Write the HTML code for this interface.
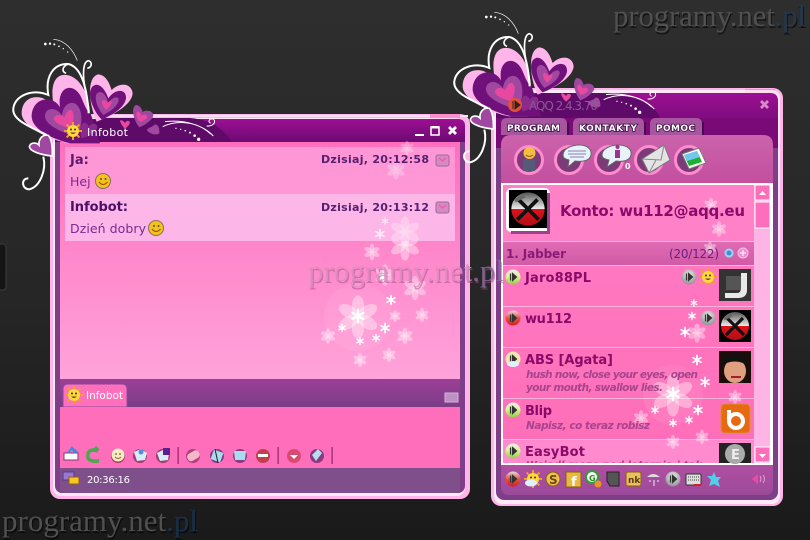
<!DOCTYPE html>
<html><head><meta charset="utf-8"><title>AQQ</title>
<style>
html,body{margin:0;padding:0;background:#222;width:810px;height:540px;overflow:hidden}
svg{display:block;position:absolute;left:0;top:0}
.d{font-family:"DejaVu Sans",sans-serif}
.db{font-family:"DejaVu Sans",sans-serif;font-weight:bold}
.wm{font-family:"Liberation Serif",serif;font-size:31px;filter:drop-shadow(1px 2px 0 rgba(0,0,0,.55))}
.wc{font-family:"Liberation Serif",serif;font-size:31px;filter:drop-shadow(1px 2px 0 rgba(170,70,140,.6))}
.tab{paint-order:stroke;stroke:#3a0a40;stroke-width:1.6px}
</style></head><body>
<svg width="810" height="540" viewBox="0 0 810 540" xmlns="http://www.w3.org/2000/svg">
<defs>
<linearGradient id="bg" x1="0" y1="0" x2="0" y2="1"><stop offset="0" stop-color="#2e2e2e"/><stop offset=".55" stop-color="#262626"/><stop offset="1" stop-color="#1a1a1a"/></linearGradient>
<linearGradient id="tb" x1="0" y1="0" x2="0" y2="1"><stop offset="0" stop-color="#9c0f92"/><stop offset="1" stop-color="#6d0a72"/></linearGradient>
<linearGradient id="pk" x1="0" y1="0" x2="0" y2="1"><stop offset="0" stop-color="#ff6fbe"/><stop offset="1" stop-color="#ffa3da"/></linearGradient>
<linearGradient id="strip" x1="0" y1="0" x2="0" y2="1"><stop offset="0" stop-color="#9c3f98"/><stop offset="1" stop-color="#7a3d86"/></linearGradient>
<linearGradient id="panel" x1="0" y1="0" x2="0" y2="1"><stop offset="0" stop-color="#cc63ac"/><stop offset="1" stop-color="#c24f9f"/></linearGradient>
<linearGradient id="row" x1="0" y1="0" x2="0" y2="1"><stop offset="0" stop-color="#ff7cc4"/><stop offset="1" stop-color="#ff6db8"/></linearGradient>
<linearGradient id="hdr" x1="0" y1="0" x2="0" y2="1"><stop offset="0" stop-color="#e06cb4"/><stop offset="1" stop-color="#d25aa6"/></linearGradient>
<linearGradient id="bt" x1="0" y1="0" x2="0" y2="1"><stop offset="0" stop-color="#b04fa2"/><stop offset="1" stop-color="#9c4a9a"/></linearGradient>
<radialGradient id="gr" cx=".5" cy=".35" r=".7"><stop offset="0" stop-color="#eee"/><stop offset="1" stop-color="#8a8a8a"/></radialGradient>
<linearGradient id="gn" x1="0" y1="0" x2="0" y2="1"><stop offset="0" stop-color="#eee"/><stop offset=".5" stop-color="#d8f090"/><stop offset="1" stop-color="#90d040"/></linearGradient>
<linearGradient id="rd" x1="0" y1="0" x2="0" y2="1"><stop offset="0" stop-color="#ddd"/><stop offset=".5" stop-color="#e85040"/><stop offset="1" stop-color="#d02020"/></linearGradient>
<linearGradient id="pft" x1="0" y1="0" x2="0" y2="1"><stop offset="0" stop-color="#555"/><stop offset=".5" stop-color="#eee"/><stop offset=".5" stop-color="#e01018"/><stop offset="1" stop-color="#b01018"/></linearGradient>
<g id="fl"><g fill="#fff" fill-opacity=".38"><ellipse cx="0" cy="-6" rx="3.400" ry="6"/><ellipse cx="0" cy="-6" rx="3.400" ry="6" transform="rotate(60)"/><ellipse cx="0" cy="-6" rx="3.400" ry="6" transform="rotate(120)"/><ellipse cx="0" cy="-6" rx="3.400" ry="6" transform="rotate(180)"/><ellipse cx="0" cy="-6" rx="3.400" ry="6" transform="rotate(240)"/><ellipse cx="0" cy="-6" rx="3.400" ry="6" transform="rotate(300)"/></g></g>
<g id="fw"><g stroke="#fff" stroke-width="1.700" stroke-linecap="round"><path d="M0-4.500V4.500M-3.900-2.200 3.900 2.200M-3.900 2.200 3.900-2.200"/></g></g>
<g id="st"><path d="M-2.500-3.500V3.500M-.5-3.500 3.500 0-.5 3.500Z" fill="#333" stroke="#333" stroke-width="1.200"/></g>
<g id="sg"><circle r="7.500" fill="url(#gr)"/><use href="#st"/></g>
<g id="sn"><circle r="7.500" fill="url(#gn)"/><use href="#st"/></g>
<g id="sr"><circle r="7.500" fill="url(#rd)"/><use href="#st"/></g>
<g id="sun"><path d="M0-9V9M-9 0H9M-6.400-6.400 6.400 6.400M-6.400 6.400 6.400-6.400" stroke="#f0a020" stroke-width="2"/><circle r="6" fill="#ffd83a"/><circle cx="-2" cy="-1.500" r="1" fill="#333"/><circle cx="2" cy="-1.500" r="1" fill="#333"/><path d="M-3 1.500Q0 4.500 3 1.500Z" fill="#633"/></g>
<g id="sm"><circle r="7.500" fill="#f5c21c" stroke="#80705a"/><circle cx="-2" cy="-2" r="1" fill="#553"/><circle cx="2.500" cy="-2" r="1" fill="#553"/><path d="M-4 1Q0 6 4.500 1" fill="none" stroke="#a05010" stroke-width="1.200"/></g>
<g id="pf"><rect x="-16" y="-16" width="32" height="32" fill="#000"/><circle r="14" fill="url(#pft)"/><path d="M-8-8 9 9M8-8-9 9" stroke="#111" stroke-width="3.200"/><path d="M-11-7-3-11" stroke="#666" stroke-width="3"/></g>
<g id="decor">
<g transform="translate(0,30) scale(.3333)">
<path d="M205 340C150 330 65 290 65 250C65 195 125 185 162 228C150 175 160 130 200 135C240 140 268 195 270 250L262 340Z" fill="#ffb4ea"/>
<path d="M210 340C150 325 92 295 95 255C100 200 160 195 180 232C170 165 225 155 245 205C256 232 262 245 272 250L300 340Z" fill="#70107a"/>
<path d="M205 312C170 300 132 280 135 255C140 230 170 232 186 256C190 215 228 205 240 240C250 270 240 300 232 320Z" fill="#a0489f"/>
<path d="M200 292C178 285 160 275 162 264C168 250 188 255 194 263C198 240 215 232 220 250C224 268 216 285 208 296Z" fill="#e8489f"/>
<path d="M245 325C238 305 240 280 252 278C260 278 264 285 266 290C275 278 292 278 292 292C290 305 270 318 245 325Z" fill="#8a2a8a"/>
<path d="M290 275C265 220 260 140 295 133C320 135 330 165 335 180C360 155 395 160 398 190C395 225 340 255 290 275Z" fill="#ffb4ea"/>
<path d="M305 268C275 240 255 175 285 165C305 160 320 190 325 205C345 175 380 175 378 205C375 230 340 255 305 268Z" fill="#70107a"/>
<path d="M310 255C285 225 280 190 298 186C315 186 320 205 325 218C340 198 358 198 356 212C350 232 330 245 310 255Z" fill="#a0489f"/>
<path d="M318 240C305 225 303 212 310 210C317 210 320 215 322 220C328 212 335 212 335 218C332 228 325 235 318 240Z" fill="#e8489f"/>
<path d="M418 292C400 270 392 232 408 225C420 225 426 238 428 246C440 238 460 242 460 258C455 272 435 285 418 292Z" fill="#a0489f"/>
<path d="M420 276C410 265 405 250 412 245C420 245 423 252 425 257C432 252 442 254 442 262C438 268 430 273 420 276Z" fill="#e8489f"/>
<path d="M157 378C125 375 90 365 88 350C92 335 110 338 117 345C115 325 130 312 145 316C155 325 158 355 157 378Z" fill="#a0489f" stroke="#fff" stroke-width="5"/>
<path d="M140 315C90 290 35 270 40 235C45 195 100 175 145 195C135 140 160 100 205 102C240 110 260 160 266 250" fill="none" stroke="#fff" stroke-width="6"/>
<path d="M205 102C185 110 185 125 198 130M258 190C245 130 250 95 265 92C277 95 277 112 262 115" fill="none" stroke="#fff" stroke-width="5"/>
<path d="M160 28C195 30 220 60 232 92" fill="none" stroke="#fff" stroke-width="2"/>
<path d="M130 380C140 420 120 470 88 478C65 478 62 445 85 445" fill="none" stroke="#fff" stroke-width="6"/>
<g fill="#fff"><circle cx="136" cy="42" r="4"/><circle cx="150" cy="41" r="3.500"/><circle cx="163" cy="43" r="3"/><circle cx="177" cy="49" r="2.500"/><circle cx="190" cy="56" r="2"/><circle cx="203" cy="66" r="2"/></g>
</g>
</g>
<g id="swoosh"><g transform="translate(0,30) scale(.3333)">
<path d="M488 290C530 270 590 272 632 312M495 275C550 268 610 285 640 318M620 288C640 290 650 275 640 267C628 265 622 275 632 280" fill="none" stroke="#fff" stroke-width="3"/>
<g fill="#fff"><circle cx="596" cy="328" r="5"/><circle cx="584" cy="317" r="4"/><circle cx="570" cy="308" r="3"/><circle cx="556" cy="302" r="2.500"/><circle cx="542" cy="298" r="2"/><circle cx="528" cy="295" r="2"/></g>
<path d="M360 272C366 268 372 276 375 279C378 272 388 270 390 278C388 286 380 292 375 296C370 292 362 282 360 272Z" fill="#e8489f"/>
<path d="M440 300C448 290 458 292 462 285C472 278 480 295 478 310C465 318 448 310 440 300Z" fill="#a0489f"/>
</g></g>
</defs>

<rect width="810" height="540" fill="url(#bg)"/>
<rect x="-6" y="244" width="12" height="46" rx="3" fill="#151515" stroke="#3c3c3c"/>
<text class="wm" x="613" y="26" fill="#505050" textLength="193">programy.net<tspan fill="#23384f">.pl</tspan></text>
<text class="wm" x="2" y="531" fill="#505050" textLength="196">programy.net<tspan fill="#18304a">.pl</tspan></text>

<!-- WINDOW 1 -->
<rect x="50" y="114" width="420" height="385" rx="10" fill="#ffb4ea"/>
<rect x="52" y="115" width="416" height="2" fill="#ffe0f4"/>
<rect x="430" y="114" width="30" height="5" fill="#ff8ccf"/>
<rect x="53" y="118" width="412" height="378" rx="8" fill="#fff" opacity=".7"/>
<rect x="55" y="119" width="410" height="374" rx="7" fill="#7f3f88"/>
<path d="M55 142V126Q55 119 62 119H458Q465 119 465 126V142Z" fill="url(#tb)"/>
<path d="M55 142V128L100 118H190C215 120 225 132 232 142Z" fill="#5e0a68"/>
<rect x="60" y="142" width="400" height="237" fill="url(#pk)"/>
<!-- flowers w1 -->
<g>
<circle cx="358" cy="317" r="34" fill="#fff" fill-opacity=".07"/>
<g transform="translate(358,317) scale(1.800)"><use href="#fl"/></g>
<g transform="translate(358,316) scale(1.400)"><use href="#fw"/></g>
<g transform="translate(391,300)"><use href="#fw"/></g><g transform="translate(383,277)"><use href="#fw"/></g>
<g transform="translate(342,328) scale(.8)"><use href="#fw"/></g><g transform="translate(385,328)"><use href="#fw"/></g>
<g transform="translate(360,341) scale(.8)"><use href="#fw"/></g><g transform="translate(376,338) scale(.8)"><use href="#fw"/></g>
<g transform="translate(395,316) scale(.5)"><use href="#fl"/></g><g transform="translate(405,336) scale(.7)"><use href="#fl"/></g>
<g transform="translate(328,336) scale(.65)"><use href="#fl"/></g><g transform="translate(360,360) scale(.6)"><use href="#fl"/></g>
<g transform="translate(389,355) scale(.6)"><use href="#fl"/></g><g transform="translate(422,315) scale(.6)"><use href="#fl"/></g>
<g transform="translate(415,288) scale(1)"><use href="#fl"/></g><g transform="translate(405,245) scale(1.300)"><use href="#fl"/></g>
<g transform="translate(372,252) scale(.7)"><use href="#fl"/></g><g transform="translate(385,275) scale(.9)"><use href="#fl"/></g>
</g>
<rect x="65" y="147" width="390" height="47" fill="#ff96d6"/>
<rect x="65" y="194" width="390" height="47" fill="#fdb6e8"/>
<g opacity=".7"><g transform="translate(396,170) scale(.8)"><use href="#fl"/></g><g transform="translate(407,148) scale(.6)"><use href="#fl"/></g><g transform="translate(385,221) scale(.7)"><use href="#fw"/></g><g transform="translate(380,234)"><use href="#fw"/></g><g transform="translate(405,232) scale(1.300)"><use href="#fl"/></g></g>
<text class="db" x="70" y="164" font-size="13" fill="#5a1a70">Ja:</text>
<text class="d" x="70" y="186" font-size="12.500" fill="#7a2a90">Hej</text>
<use href="#sm" x="103" y="181"/>
<text class="db" x="321" y="163" font-size="11" fill="#562070" textLength="108">Dzisiaj, 20:12:58</text>
<rect x="436" y="155" width="13" height="11" rx="2" fill="#d38bc0" stroke="#a06a9a"/><path d="M439 158 442.500 161 446 158" fill="none" stroke="#ff50b8" stroke-width="1.300"/>
<text class="db" x="70" y="211" font-size="13" fill="#4a1068" textLength="58">Infobot:</text>
<text class="d" x="70" y="233" font-size="12.500" fill="#7a2a90" textLength="76">Dzień dobry</text>
<use href="#sm" x="156" y="228"/>
<text class="db" x="321" y="211" font-size="11" fill="#562070" textLength="108">Dzisiaj, 20:13:12</text>
<rect x="436" y="202" width="13" height="11" rx="2" fill="#d38bc0" stroke="#a06a9a"/><path d="M439 205 442.500 208 446 205" fill="none" stroke="#ff50b8" stroke-width="1.300"/>
<use href="#decor"/>
<use href="#swoosh"/>
<use href="#sun" x="73" y="131"/>
<text class="d" x="87" y="136" font-size="11" fill="#fff" textLength="41">Infobot</text>
<rect x="415" y="134" width="9" height="2" fill="#fff"/>
<rect x="431" y="127" width="8" height="8" fill="none" stroke="#fff" stroke-width="1.500"/><rect x="431" y="126" width="8" height="2.500" fill="#fff"/>
<path d="M449 127 456 134M456 127 449 134" stroke="#fff" stroke-width="2.800"/>
<!-- strip -->
<rect x="60" y="379" width="400" height="28" fill="url(#strip)"/>
<path d="M63 407V389Q63 384 68 384H122Q127 384 127 389V407Z" fill="#ff6fbc" stroke="#8a4a9a"/>
<use href="#sun" x="74" y="395"/>
<text class="d" x="86" y="399" font-size="10.500" fill="#fff" textLength="37">Infobot</text>
<rect x="445" y="393" width="13" height="9" fill="#c9a8cf" stroke="#ece" opacity=".8"/>
<rect x="60" y="407" width="400" height="61" fill="#ff6eba"/>
<!-- w1 toolbar -->
<g>
<path d="M64 460V453H78V460Z" fill="#fff" stroke="#7a3a70"/><path d="M68 453 72 448 75 453M71 447 77 452" fill="none" stroke="#3f8ae0" stroke-width="2"/>
<path d="M98 451C90 448 87 452 88 458C90 462 96 461 99 461" fill="none" stroke="#4aa850" stroke-width="3.500"/><path d="M92 450 100 450 96 446Z" fill="#4aa850"/>
<circle cx="118" cy="456" r="7" fill="#9c3f70"/><circle cx="118" cy="455" r="6.500" fill="#f6ecc0"/><circle cx="116" cy="454" r=".8" fill="#333"/><circle cx="120" cy="454" r=".8" fill="#333"/><path d="M115 457Q118 460 121 457" stroke="#a06020" fill="none"/>
<circle cx="140" cy="456" r="7" fill="#9c3f70"/><path d="M134 452 141 449 147 453 145 460 137 461Z" fill="#d8ecf8"/><circle cx="141" cy="452" r="2.500" fill="#4a90e0"/>
<circle cx="163" cy="456" r="7" fill="#9c3f70"/><path d="M157 453 163 450 169 453 168 460 160 461Z" fill="#d8ecf8"/><rect x="163" y="448" width="7" height="7" fill="#5a2090"/>
<rect x="177.500" y="447" width="1.300" height="17" fill="#9c2a70"/>
<circle cx="193" cy="456" r="7" fill="#b04080"/><rect x="187" y="452" width="13" height="8" rx="3.500" transform="rotate(-30 193 456)" fill="#f6b8c8"/>
<circle cx="217" cy="456" r="7" fill="#8a3a80"/><rect x="212" y="451" width="10" height="10" transform="rotate(20 217 456)" fill="#a8dcec"/><path d="M215 449 218 463" stroke="#222"/>
<circle cx="240" cy="456" r="7" fill="#8a3a80"/><path d="M234 451H246L245 460H235Z" fill="#a8dcec"/>
<circle cx="263" cy="456" r="7" fill="#c04050"/><rect x="258" y="454" width="10" height="3" fill="#fff"/>
<rect x="277.500" y="447" width="1.300" height="17" fill="#9c2a70"/>
<circle cx="294" cy="456" r="7" fill="#d84a70"/><path d="M290 455H298L294 459Z" fill="#fff"/>
<circle cx="317" cy="456" r="7" fill="#8a3a80"/><path d="M312 455 318 449 322 453 316 461Z" fill="#b8dcec"/>
<rect x="331.500" y="447" width="1.300" height="17" fill="#9c2a70"/>
</g>
<rect x="60" y="468" width="400" height="25" fill="#7f4f8c"/>
<rect x="63" y="472" width="11" height="8" fill="#9a78d0" stroke="#5a3a90"/><rect x="69" y="477" width="10" height="7" fill="#f8c820" stroke="#906010"/>
<text class="d" x="87" y="483" font-size="10" fill="#fff" textLength="43">20:36:16</text>

<!-- WINDOW 2 -->
<rect x="491" y="88" width="292" height="418" rx="10" fill="#ffb4ea"/>
<rect x="745" y="89" width="30" height="4" fill="#ff8ccf"/>
<rect x="494" y="90" width="286" height="414" rx="8" fill="#fff" opacity=".7"/>
<rect x="496" y="93" width="282" height="407" rx="8" fill="#7f3f88"/>
<path d="M496 135V101Q496 93 504 93H770Q778 93 778 101V135Z" fill="url(#tb)"/>
<rect x="496" y="118" width="282" height="30" fill="#7a0a78"/>
<path d="M496 118V102L540 93H600C640 96 655 105 660 118Z" fill="#5e0a68"/>
<use href="#decor" x="441" y="-27"/>
<use href="#swoosh" x="441" y="-27"/>
<circle cx="515" cy="105" r="7" fill="#e0503a"/><path d="M513 101V109M515 101 520 105 515 109Z" fill="#321" stroke="#321"/>
<text class="d" x="529" y="110" font-size="12" fill="#8a5a96" textLength="69">AQQ 2.4.3.70</text>
<path d="M761 101 768 108M768 101 761 108" stroke="#d68cc8" stroke-width="2.800"/>
<!-- tabs -->
<g fill="#a8559f"><path d="M501 135V124Q501 118 507 118H561Q567 118 567 124V135Z"/><path d="M573 135V124Q573 118 579 118H638Q644 118 644 124V135Z"/><path d="M650 135V124Q650 118 656 118H696Q702 118 702 124V135Z"/></g>
<g fill="#4a0a52"><rect x="567" y="122" width="2" height="13"/><rect x="644" y="122" width="2" height="13"/><rect x="702" y="122" width="2" height="13"/></g>
<g class="db" font-size="9" fill="#fff"><text class="tab" x="507" y="131" textLength="53">PROGRAM</text><text class="tab" x="579" y="131" textLength="58">KONTAKTY</text><text class="tab" x="656" y="131" textLength="39">POMOC</text></g>
<!-- panel -->
<path d="M501 184V145Q501 135 511 135H763Q773 135 773 145V184Z" fill="url(#panel)"/>
<g fill="#7d3a78" stroke="#ff8ccf" stroke-width="3"><circle cx="529" cy="160" r="13.500"/><circle cx="569" cy="160" r="13.500"/><circle cx="609" cy="160" r="13.500"/><circle cx="649" cy="160" r="13.500"/><circle cx="689" cy="160" r="13.500"/></g>
<path d="M523 171V160L529 157 535 160V171Z" fill="#555a78"/><circle cx="529.500" cy="153" r="6" fill="#f2c040"/><path d="M526 155Q529 158 533 155" stroke="#a05020" fill="none"/>
<path d="M563 155C563 147 575 145 579 145C588 145 592 150 591 155C590 161 582 162 575 161L568 167 569 160C565 159 563 158 563 155Z" fill="#e8f2fa" stroke="#666"/><path d="M568 151H586M568 154H586M570 157H584" stroke="#8a80b0"/>
<path d="M602 155C602 148 612 145 618 145C628 145 632 150 631 155C630 161 622 162 616 161L607 167 609 160C605 159 602 158 602 155Z" fill="#e8f2fa" stroke="#666"/><rect x="615" y="150" width="5" height="8" fill="#a03090"/><circle cx="617.500" cy="147" r="2" fill="#a03090"/>
<text class="db" x="625" y="169" font-size="8" fill="#fff">0</text>
<path d="M642 159 664 145 670 160 649 173Z" fill="#e4e4e4" stroke="#777"/><path d="M642 159 661 160 664 145M649 173 656 160" fill="none" stroke="#888"/>
<path d="M682 154 699 148 706 163 689 169Z" fill="#fff" stroke="#777"/><path d="M684 155 697 151 702 162 689 166Z" fill="#20b030"/><path d="M684 155 697 151 700 157 687 161Z" fill="#70c8f0"/>
<!-- list -->
<rect x="501" y="183" width="272" height="282" fill="#fff"/>
<rect x="503" y="185" width="251" height="278" fill="url(#row)"/>
<rect x="503" y="185" width="251" height="56" fill="#ff82c9"/>
<rect x="754" y="185" width="16" height="278" fill="#ffb4e6"/>
<rect x="503" y="241" width="251" height="24" fill="url(#hdr)"/>
<g fill="#ffb4e0"><rect x="503" y="241" width="251" height="1"/><rect x="503" y="265" width="251" height="1"/><rect x="503" y="306" width="251" height="1"/><rect x="503" y="347" width="251" height="1"/><rect x="503" y="398" width="251" height="1"/><rect x="503" y="439" width="251" height="1"/></g>
<rect x="503" y="440" width="251" height="23" fill="#ff8ace"/>
<!-- list flowers -->
<g>
<circle cx="673" cy="395" r="30" fill="#fff" fill-opacity=".07"/>
<g transform="translate(673,395) scale(1.800)"><use href="#fl"/></g><g transform="translate(673,394) scale(1.400)"><use href="#fw"/></g>
<g transform="translate(705,382)"><use href="#fw"/></g><g transform="translate(697,360)"><use href="#fw"/></g>
<g transform="translate(655,410) scale(.8)"><use href="#fw"/></g><g transform="translate(698,410)"><use href="#fw"/></g>
<g transform="translate(673,423) scale(.8)"><use href="#fw"/></g><g transform="translate(689,420) scale(.8)"><use href="#fw"/></g>
<g transform="translate(641,418) scale(.65)"><use href="#fl"/></g><g transform="translate(673,442) scale(.6)"><use href="#fl"/></g>
<g transform="translate(702,437) scale(.6)"><use href="#fl"/></g><g transform="translate(735,397) scale(.6)"><use href="#fl"/></g>
<g transform="translate(697,333) scale(.8)"><use href="#fl"/></g><g transform="translate(685,332) scale(1)"><use href="#fw"/></g>
<g transform="translate(692,316) scale(.8)"><use href="#fw"/></g><g transform="translate(694,303) scale(.7)"><use href="#fw"/></g>
<g transform="translate(711,205) scale(.6)"><use href="#fl"/></g><g transform="translate(719,229) scale(.65)"><use href="#fl"/></g>
<g transform="translate(710,248) scale(.55)"><use href="#fl"/></g>
</g>
<!-- konto -->
<rect x="506" y="188" width="44" height="44" rx="5" fill="#fff"/><rect x="547" y="193" width="3" height="41" fill="#a0408a"/><rect x="511" y="231" width="39" height="3" fill="#a0408a"/>
<use href="#pf" transform="translate(528 209) scale(1.190)"/>
<text class="db" x="560" y="216" font-size="15" fill="#8a0a6a" textLength="185">Konto: wu112@aqq.eu</text>
<!-- header row -->
<text class="db" x="506" y="258" font-size="12" fill="#8a1a78" textLength="60">1. Jabber</text>
<text class="d" x="669" y="258" font-size="12" fill="#6a2080" textLength="50">(20/122)</text>
<circle cx="729" cy="253" r="5" fill="#a8d0ec" stroke="#c070b0"/><circle cx="729" cy="253" r="2.500" fill="#3a90e0"/>
<circle cx="743" cy="253" r="5" fill="#f08cd0" stroke="#f8c0e4"/><path d="M740 253H746M743 250V256" stroke="#fff"/>
<!-- rows -->
<use href="#sn" x="513" y="277"/>
<text class="db" x="525" y="282" font-size="13" fill="#8a0a6a" textLength="66">Jaro88PL</text>
<use href="#sg" x="689" y="277"/><use href="#sun" x="708" y="277"/>
<rect x="719" y="269" width="32" height="32" fill="#333"/><path d="M726 276H742V290H726Z" fill="#555"/><path d="M741 273H747V290Q747 298 738 298H725V293H737Q741 293 741 288Z" fill="#e8e8e8"/>
<use href="#sr" x="513" y="318"/>
<text class="db" x="525" y="323" font-size="13" fill="#8a0a6a" textLength="47">wu112</text>
<use href="#sg" x="708" y="318"/><use href="#pf" x="735" y="326"/>
<circle cx="513" cy="359" r="7.500" fill="#f4e4b0"/><use href="#st" x="513" y="359"/><ellipse cx="513" cy="364" rx="6" ry="3" fill="#dff0fa"/>
<text class="db" x="525" y="364" font-size="13" fill="#8a0a6a" textLength="88">ABS [Agata]</text>
<g class="db" font-size="10.500" font-style="italic" fill="#a8448e"><text x="526" y="378" textLength="172">hush now, close your eyes, open</text><text x="526" y="391" textLength="137">your mouth, swallow lies.</text></g>
<rect x="719" y="351" width="32" height="32" fill="#1a0d0a"/><ellipse cx="735" cy="371" rx="11" ry="12" fill="#e0a080"/><path d="M721 366C724 352 746 352 748 366C740 360 730 360 721 366Z" fill="#111"/><path d="M731 377H741" stroke="#a02030" stroke-width="2"/>
<use href="#sn" x="513" y="410"/>
<text class="db" x="525" y="415" font-size="13" fill="#8a0a6a" textLength="27">Blip</text>
<text class="db" x="526" y="429" font-size="10.500" font-style="italic" fill="#a8448e" textLength="124">Napisz, co teraz robisz</text>
<rect x="721" y="404" width="29" height="29" rx="4" fill="#e86a10" stroke="#d89030"/><circle cx="736" cy="421" r="7" fill="none" stroke="#fff" stroke-width="4"/><path d="M729 410V421" stroke="#fff" stroke-width="4"/>
<use href="#sn" x="513" y="451"/>
<text class="db" x="525" y="456" font-size="13" fill="#8a0a6a" textLength="60">EasyBot</text>
<rect x="719" y="443" width="32" height="20" fill="#222"/><circle cx="735" cy="454" r="10" fill="#aaa"/><text class="db" x="731" y="459" font-size="13" fill="#eee">E</text>
<g class="db" font-size="10" font-style="italic" fill="#a8448e"><clipPath id="cl"><rect x="503" y="460" width="251" height="3"/></clipPath><text x="526" y="468" clip-path="url(#cl)" textLength="180">Wsiadl moze pod latarnia i tak.</text></g>
<!-- scrollbar -->
<rect x="755" y="185" width="15" height="15" fill="#ff6eba" stroke="#fff"/><path d="M759 195 762.500 191 766 195Z" fill="#fff"/>
<rect x="755" y="202" width="15" height="26" fill="#ff6eba" stroke="#fff"/>
<rect x="755" y="447" width="15" height="15" fill="#ff6eba" stroke="#fff"/><path d="M759 454H766L762.500 458Z" fill="#fff"/>
<!-- bottom bar -->
<path d="M501 465H773V487Q773 495 765 495H509Q501 495 501 487Z" fill="url(#bt)"/>
<g>
<use href="#sr" x="513" y="479"/>
<use href="#sun" x="533" y="479"/><ellipse cx="531" cy="483" rx="6" ry="3.500" fill="#dff0fa"/>
<circle cx="553" cy="479" r="7" fill="#f0c050" stroke="#8a6010"/><text class="db" x="549" y="484" font-size="12" fill="#6a4a10">S</text>
<rect x="566" y="472" width="15" height="15" fill="#e8b840" stroke="#8a6010"/><text class="db" x="571" y="486" font-size="13" fill="#fff">f</text>
<circle cx="592" cy="477" r="6" fill="#fff" stroke="#30a030" stroke-width="2"/><text class="db" x="589" y="481" font-size="8" fill="#209020">G</text><circle cx="598" cy="484" r="3.500" fill="#f09020"/>
<path d="M607 472H619V486H610L607 481Z" fill="#555" stroke="#222"/>
<rect x="626" y="472" width="15" height="14" rx="2" fill="#e8c060" stroke="#8a6010"/><text class="db" x="628" y="483" font-size="9" fill="#5a3a10">nk</text>
<path d="M647 477Q653 471 660 477Z" fill="#ddd"/><path d="M650 480V482M654 480V486M658 480V482" stroke="#eee"/>
<use href="#sg" x="673" y="479"/>
<rect x="686" y="474" width="15" height="11" rx="1" fill="#ddd" stroke="#333"/><path d="M688 477H699M688 480H699" stroke="#444" stroke-dasharray="1 1"/><rect x="694" y="484" width="7" height="2" fill="#d02020"/>
<path d="M714 472 716 477 721 477 718 481 720 487 714 484 709 486 711 480 707 476 712 476Z" fill="#50d0e8"/>
<path d="M752 479 758 474V484Z" fill="#f048a8"/><path d="M760 476Q762 479 760 482M763 475Q766 479 763 483" stroke="#e8a0d0" fill="none"/>
</g>
<!-- center watermark over window -->
<text class="wc" x="308" y="281" fill="#dc90c0" fill-opacity=".85" textLength="196">programy.net<tspan fill="#8a6aa0">.pl</tspan></text>
</svg>
</body></html>
